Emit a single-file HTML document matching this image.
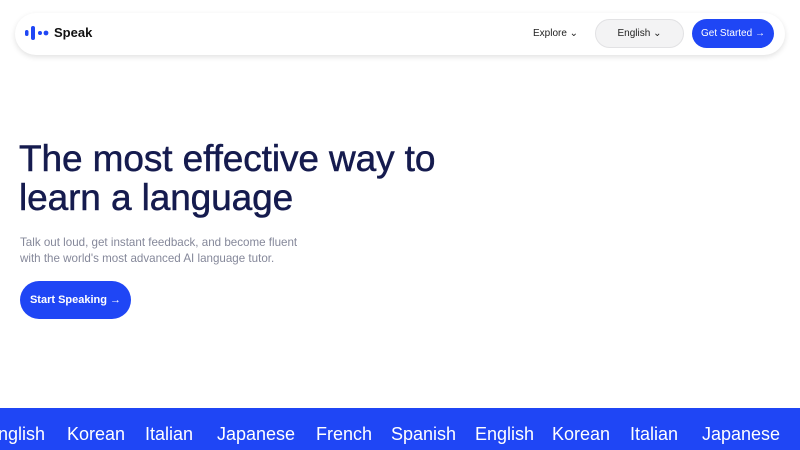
<!DOCTYPE html>
<html><head><meta charset="utf-8"><style>
*{margin:0;padding:0;box-sizing:border-box}
body{width:800px;height:450px;overflow:hidden;background:#fff;font-family:"Liberation Sans",sans-serif;position:relative}
.nav{position:absolute;left:15px;top:13px;width:770px;height:42px;border-radius:21px;background:#fff;box-shadow:0 2px 6px rgba(0,0,0,.12)}
.abs{position:absolute;white-space:nowrap}
h1{position:absolute;left:19px;top:139px;font-size:37px;line-height:39px;font-weight:normal;color:#151b4e;letter-spacing:-0.1px;-webkit-text-stroke:0.5px #151b4e}
.p{position:absolute;left:20px;top:235px;font-size:11.6px;line-height:15.5px;color:#85889a}
.btn{position:absolute;left:20px;top:281px;width:111px;height:38px;border-radius:19px;background:#1f46f5;color:#fff;font-size:11px;font-weight:bold;line-height:38px;text-align:center}
.band{position:absolute;left:0;top:408px;width:800px;height:42px;background:#1f46f5}
.band span{position:absolute;top:16px;color:#fff;font-size:18px;white-space:nowrap}
</style></head><body>
<div class="nav"></div>
<svg class="abs" style="left:25px;top:26px" width="26" height="14" viewBox="0 0 26 14">
<rect x="0" y="4" width="3.5" height="6" rx="1.75" fill="#1f46f5"/>
<rect x="6" y="0" width="4" height="14" rx="2" fill="#1f46f5"/>
<circle cx="15" cy="7" r="2" fill="#1f46f5"/>
<circle cx="21" cy="7" r="2.4" fill="#1f46f5"/>
</svg>
<div class="abs" style="left:54px;top:25px;font-size:13px;font-weight:bold;color:#111">Speak</div>
<div class="abs" style="left:533px;top:28px;font-size:10px;color:#222">Explore ⌄</div>
<div class="abs" style="left:595px;top:19px;width:89px;height:29px;border-radius:15px;background:#f3f3f4;border:1px solid #e2e2e4;font-size:10px;color:#222;text-align:center;line-height:27px">English ⌄</div>
<div class="abs" style="left:692px;top:19px;width:82px;height:29px;border-radius:15px;background:#1f46f5;font-size:10px;color:#fff;text-align:center;line-height:29px">Get Started →</div>
<h1>The most effective way to<br>learn a language</h1>
<div class="p">Talk out loud, get instant feedback, and become fluent<br>with the world's most advanced AI language tutor.</div>
<div class="btn">Start Speaking →</div>
<div class="band">
<span style="left:-2px">nglish</span>
<span style="left:67px">Korean</span>
<span style="left:145px">Italian</span>
<span style="left:217px">Japanese</span>
<span style="left:316px">French</span>
<span style="left:391px">Spanish</span>
<span style="left:475px">English</span>
<span style="left:552px">Korean</span>
<span style="left:630px">Italian</span>
<span style="left:702px">Japanese</span>
</div>
</body></html>
